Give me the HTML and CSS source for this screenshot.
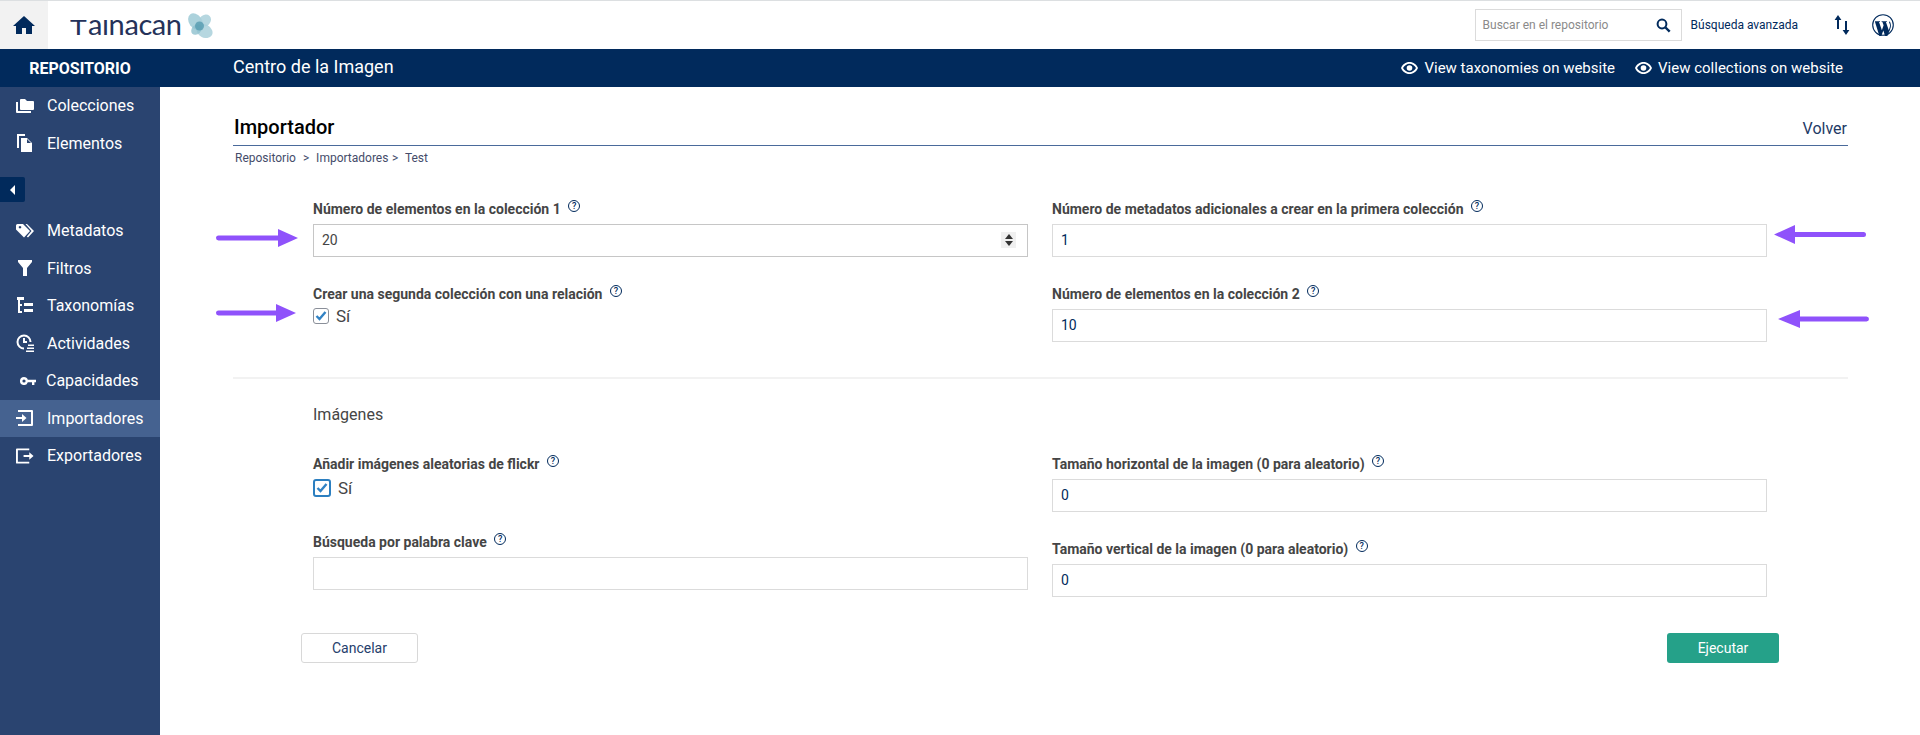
FILE: index.html
```html
<!DOCTYPE html>
<html lang="es">

<head>
    <meta charset="UTF-8">
    <title>Importador</title>
    <link rel="stylesheet" href="styles.css">
</head>

<body>

    <header class="topbar">
        <a class="home-btn">
            <svg width="22" height="20" viewBox="0 0 22 20"><path fill="#012a5c" d="M11 1 0 11h3v8h6v-6h4v6h6v-8h3z"/></svg>
        </a>
        <div class="logo">
            <span class="logo-text"><span class="logo-t">T</span>aınacan</span>
            <svg width="26" height="25" viewBox="0 0 26 25">
                <ellipse cx="8.500" cy="8.500" rx="9" ry="6.500" transform="rotate(55 8.500 8.500)" fill="#9ecad6" opacity=".85"/>
                <ellipse cx="18" cy="7.500" rx="6.500" ry="5.500" transform="rotate(-45 18 7.500)" fill="#a9d0db" opacity=".85"/>
                <ellipse cx="17.500" cy="18" rx="8.500" ry="6.500" transform="rotate(30 17.500 18)" fill="#a9d0db" opacity=".85"/>
                <ellipse cx="9.500" cy="16.500" rx="6" ry="4.500" transform="rotate(-45 9.500 16.500)" fill="#8fc0ce" opacity=".8"/>
                <circle cx="12.500" cy="13" r="4.500" fill="#5a9fb3" opacity=".85"/>
            </svg>
        </div>
        <div class="top-tools">
            <div class="search-box">
                <span>Buscar en el repositorio</span>
                <svg width="15" height="15" viewBox="0 0 15 15"><circle cx="6" cy="6" r="4.400" fill="none" stroke="#012a5c" stroke-width="2"/><path d="m9.500 9.500 4.200 4.200" stroke="#012a5c" stroke-width="2.400"/></svg>
            </div>
            <a class="adv-search">Búsqueda avanzada</a>
            <svg class="sort-icon" width="16" height="22" viewBox="0 0 16 22"><path fill="#012a5c" d="M4 1 .6 6h2.400v9h2V6h2.400zM11 7v9H8.600l3.400 5 3.400-5H13V7z"/></svg>
            <svg class="wp-icon" width="22" height="22" viewBox="0 0 22 22">
                <circle cx="11" cy="11" r="10.300" fill="none" stroke="#012a5c" stroke-width="1.100"/>
                <path fill="#012a5c" d="M2.800 7.200h5.200v.7l-1 .1 2.900 8.200 1.700-4.900-1.200-3.300-.8-.1v-.7h5.300v.7l-1 .1 2.900 8.200 1-3.200c.5-1.600.2-2.800-.4-3.700-.4-.7-.5-1.300-.2-1.900l.8.300c1.300 3 1.200 5-.2 8.500l-3.100 7.200-1 .1-2.400-7-2.500 7-1-.1z"/>
            </svg>
        </div>
    </header>

    <div class="layout">
        <aside class="sidebar">
            <div class="side-title">REPOSITORIO</div>
            <nav class="side-nav">
                <a class="side-item">
                    <svg width="18" height="16" viewBox="0 0 18 16"><path fill="#fff" d="M0 4h2v9h13v2H1a1 1 0 0 1-1-1zM4 2a1 1 0 0 1 1-1h4l2 2h6a1 1 0 0 1 1 1v7a1 1 0 0 1-1 1H5a1 1 0 0 1-1-1z"/></svg>
                    Colecciones
                </a>
                <a class="side-item">
                    <svg width="18" height="18" viewBox="0 0 18 18"><path fill="#fff" d="M1 0h8v2H3v12H1zM5 4h6l5 5v9H5zm6 1v4h4z"/></svg>
                    Elementos
                </a>
                <div class="side-toggle">
                    <span class="toggle-btn"><svg width="6" height="10" viewBox="0 0 6 10"><path fill="#fff" d="M5 0v10L0 5z"/></svg></span>
                </div>
                <a class="side-item">
                    <svg width="18" height="14" viewBox="0 0 18 14"><path fill="#fff" d="M0 1.500A1.500 1.500 0 0 1 1.500 0H7l7 7-6 6.500-8-8zM4 4.500a1.300 1.300 0 1 0-.01 0zM9.500 0h1.500l7 7-6 6.500-1.200-1L15.500 7z"/></svg>
                    Metadatos
                </a>
                <a class="side-item">
                    <svg width="18" height="16" viewBox="0 0 18 16"><path fill="#fff" d="M2 0h14v2l-5 6v8H7V8L2 2z"/></svg>
                    Filtros
                </a>
                <a class="side-item">
                    <svg width="18" height="18" viewBox="0 0 18 18"><path fill="#fff" d="M1 0h7v3H4v4h2v2H4v5h2v2H2V3H1zM8 6h9v3H8zM8 12h9v3H8z"/></svg>
                    Taxonomías
                </a>
                <a class="side-item">
                    <svg width="18" height="18" viewBox="0 0 18 18"><path fill="none" stroke="#fff" stroke-width="2" d="M14.500 8A6.500 6.500 0 1 0 8 14.500M8 4v4h3"/><path fill="#fff" d="M12 10.500h6V12h-6zM11 13.500h7V15h-7zM10 16.500h8V18h-8z"/></svg>
                    Actividades
                </a>
                <a class="side-item side-item-key">
                    <svg width="16" height="8" viewBox="0 0 16 8"><path fill="#fff" d="M4 0a4 4 0 0 1 3.800 2.800H16v2.400h-1.600V8h-2.400V5.200H7.800A4 4 0 1 1 4 0zm0 2.400a1.600 1.600 0 1 0 0 3.200 1.600 1.600 0 0 0 0-3.200z"/></svg>
                    Capacidades
                </a>
                <a class="side-item active">
                    <svg width="18" height="16" viewBox="0 0 18 16"><path fill="#fff" d="M2 0h14a1 1 0 0 1 1 1v14a1 1 0 0 1-1 1H2v-2h13V2H2zM0 7h6V4l4.500 4L6 12V9H0z"/></svg>
                    Importadores
                </a>
                <a class="side-item">
                    <svg width="19" height="16" viewBox="0 0 19 16"><path fill="#fff" d="M1 0h13v2H2v12h12v2H1a1 1 0 0 1-1-1V1a1 1 0 0 1 1-1zM8 7h6V4l4.500 4L14 12V9H8z"/></svg>
                    Exportadores
                </a>
            </nav>
        </aside>

        <main class="main">
            <div class="subheader">
                <span class="repo-name">Centro de la Imagen</span>
                <div class="view-links">
                    <a class="view-link">
                        <svg width="17" height="12" viewBox="0 0 17 12"><path fill="#fff" d="M8.500 0C4.500 0 1.500 2.500 0 6c1.500 3.500 4.500 6 8.500 6s7-2.500 8.500-6c-1.500-3.500-4.500-6-8.500-6zm0 10.200C6 10.200 3.500 8.500 2 6c1.500-2.500 4-4.200 6.500-4.200S13.500 3.500 15 6c-1.500 2.500-4 4.200-6.500 4.200z"/><circle cx="8.500" cy="6" r="2.800" fill="#fff"/></svg>
                        View taxonomies on website
                    </a>
                    <a class="view-link">
                        <svg width="17" height="12" viewBox="0 0 17 12"><path fill="#fff" d="M8.500 0C4.500 0 1.500 2.500 0 6c1.500 3.500 4.500 6 8.500 6s7-2.500 8.500-6c-1.500-3.500-4.500-6-8.500-6zm0 10.200C6 10.200 3.500 8.500 2 6c1.500-2.500 4-4.200 6.500-4.200S13.500 3.500 15 6c-1.500 2.500-4 4.200-6.500 4.200z"/><circle cx="8.500" cy="6" r="2.800" fill="#fff"/></svg>
                        View collections on website
                    </a>
                </div>
            </div>

            <div class="content">
                <div class="page-title">
                    <h1>Importador</h1>
                    <a class="back-link">Volver</a>
                </div>
                <div class="breadcrumb">Repositorio &nbsp;&gt;&nbsp;&nbsp;Importadores &gt;&nbsp; Test</div>

                <div class="form-grid form-top">
                    <div class="field">
                        <label>Número de elementos en la colección 1 <span class="help">?</span></label>
                        <div class="input input-number">
                            <span>20</span>
                            <span class="spinner"><i class="up"></i><i class="down"></i></span>
                        </div>
                    </div>
                    <div class="field">
                        <label>Número de metadatos adicionales a crear en la primera colección <span class="help">?</span></label>
                        <div class="input">1</div>
                    </div>
                    <div class="field">
                        <label>Crear una segunda colección con una relación <span class="help">?</span></label>
                        <div class="check">
                            <span class="checkbox"><svg width="12" height="10" viewBox="0 0 12 10"><path fill="none" stroke="#3182c4" stroke-width="2.400" d="m1.500 5 3 3 6-7"/></svg></span>
                            Sí
                        </div>
                    </div>
                    <div class="field">
                        <label>Número de elementos en la colección 2 <span class="help">?</span></label>
                        <div class="input">10</div>
                    </div>
                </div>

                <hr class="divider">

                <h2 class="section-title">Imágenes</h2>

                <div class="form-bottom">
                    <div class="form-col">
                        <div class="field">
                            <label>Añadir imágenes aleatorias de flickr <span class="help">?</span></label>
                            <div class="check check-focused">
                                <span class="checkbox focused"><svg width="12" height="10" viewBox="0 0 12 10"><path fill="none" stroke="#3182c4" stroke-width="2.400" d="m1.500 5 3 3 6-7"/></svg></span>
                                Sí
                            </div>
                        </div>
                        <div class="field field-keyword">
                            <label>Búsqueda por palabra clave <span class="help">?</span></label>
                            <div class="input"></div>
                        </div>
                    </div>
                    <div class="form-col">
                        <div class="field">
                            <label>Tamaño horizontal de la imagen (0 para aleatorio) <span class="help">?</span></label>
                            <div class="input">0</div>
                        </div>
                        <div class="field field-size">
                            <label>Tamaño vertical de la imagen (0 para aleatorio) <span class="help">?</span></label>
                            <div class="input">0</div>
                        </div>
                    </div>
                </div>

                <div class="actions">
                    <button class="btn btn-cancel">Cancelar</button>
                    <button class="btn btn-run">Ejecutar</button>
                </div>
            </div>
        </main>
    </div>

    <!-- flechas de anotacion encima de la captura -->
    <svg class="arrow arrow-l1" width="82" height="18" viewBox="0 0 82 18"><path fill="#8f52fb" d="M2.500 6.500H62V0l20 9-20 9v-6.500H2.500a2.500 2.500 0 0 1 0-5z"/></svg>
    <svg class="arrow arrow-l2" width="80" height="18" viewBox="0 0 80 18"><path fill="#8f52fb" d="M2.500 6.500H60V0l20 9-20 9v-6.500H2.500a2.500 2.500 0 0 1 0-5z"/></svg>
    <svg class="arrow arrow-r1" width="92" height="19" viewBox="0 0 92 19"><path fill="#8f52fb" d="M89.500 7H21V0L0 9.500 21 19v-7h68.500a2.500 2.500 0 0 0 0-5z"/></svg>
    <svg class="arrow arrow-r2" width="91" height="18" viewBox="0 0 91 18"><path fill="#8f52fb" d="M88.500 6.500H22V0L0 9l22 9v-6.500h66.500a2.500 2.500 0 0 0 0-5z"/></svg>

</body>

</html>
```

FILE: styles.css
```css
* {
    box-sizing: border-box;
}

body {
    margin: 0;
    height: 735px;
    overflow: hidden;
    position: relative;
    display: flex;
    flex-direction: column;
    font-family: Roboto, sans-serif;
    color: #454545;
    background-color: #fff;
}

/* barra superior */
.topbar {
    height: 49px;
    flex: none;
    display: flex;
    align-items: center;
    border-top: 1px solid #dcdfe1;
}

.home-btn {
    width: 48px;
    height: 48px;
    background-color: #f2f2f2;
    display: flex;
    align-items: center;
    justify-content: center;
}

.logo {
    margin-left: 22px;
    display: flex;
    align-items: center;
    gap: 5px;
}

.logo-text {
    font-family: Lato, sans-serif;
    font-size: 29px;
    line-height: 32px;
    letter-spacing: -0.4px;
    color: #25325a;
}

.logo-t {
    display: inline-block;
    font-size: 21px;
    transform: scaleX(1.35);
    transform-origin: left;
    margin-right: 6px;
}

.top-tools {
    margin-left: auto;
    display: flex;
    align-items: center;
    padding-right: 26px;
}

.search-box {
    width: 207px;
    height: 32px;
    border: 1px solid #dbdbdb;
    padding: 0 10px 0 7px;
    display: flex;
    align-items: center;
    justify-content: space-between;
    font-size: 12px;
    color: #8a8a8a;
}

.adv-search {
    margin-left: 9px;
    font-size: 12px;
    color: #012a5c;
}

.sort-icon {
    margin-left: 36px;
}

.wp-icon {
    margin-left: 22px;
}

/* layout */
.layout {
    flex: 1;
    display: flex;
}

.sidebar {
    width: 160px;
    flex: none;
    background-color: #2a4470;
}

.side-title {
    height: 38px;
    background-color: #012a5c;
    color: #fff;
    font-size: 16px;
    font-weight: 700;
    display: flex;
    align-items: center;
    justify-content: center;
}

.side-item {
    height: 37.5px;
    display: flex;
    align-items: center;
    gap: 13px;
    padding-left: 16px;
    color: #fff;
    font-size: 16px;
}

.side-item svg {
    flex: none;
    width: 18px;
}

.side-item.active {
    background-color: #456290;
}

.side-item-key {
    padding-left: 19px;
    gap: 9px;
}

.side-toggle {
    height: 50px;
    padding-top: 15px;
}

.toggle-btn {
    width: 25px;
    height: 25px;
    background-color: #012a5c;
    border-radius: 0 2px 2px 0;
    display: flex;
    align-items: center;
    justify-content: center;
}

.main {
    flex: 1;
    min-width: 0;
}

.subheader {
    height: 38px;
    background-color: #012a5c;
    color: #fff;
    display: flex;
    align-items: center;
    justify-content: space-between;
    padding: 0 77px 0 73px;
}

.repo-name {
    font-size: 18px;
    margin-bottom: 3px;
}

.view-links {
    display: flex;
    gap: 20px;
}

.view-link {
    display: flex;
    align-items: center;
    gap: 6px;
    font-size: 15px;
}

.content {
    padding: 0 72px 0 73px;
}

.page-title {
    height: 59px;
    padding-top: 22px;
    display: flex;
    align-items: center;
    justify-content: space-between;
    border-bottom: 1px solid #4a6a9b;
}

.page-title h1 {
    margin: 0 0 0 1px;
    font-size: 20px;
    font-weight: 500;
    color: #000;
}

.back-link {
    font-size: 16px;
    color: #1e3a66;
    margin-right: 1px;
    margin-top: 3px;
}

.breadcrumb {
    margin-top: 5px;
    padding-left: 2px;
    font-size: 12px;
    line-height: 14px;
    word-spacing: 0.5px;
    color: #454c6a;
}

/* formulario */
.form-grid,
.form-bottom {
    margin: 0 80px;
    display: grid;
    grid-template-columns: 715px 715px;
    column-gap: 24px;
}

.form-top {
    margin-top: 35px;
    row-gap: 28px;
}

.field label {
    display: block;
    font-size: 14px;
    font-weight: 700;
    line-height: 17px;
    height: 24px;
    color: #454545;
}

.help {
    display: inline-block;
    width: 12px;
    height: 12px;
    margin-left: 4px;
    border: 1px solid #012a5c;
    border-radius: 50%;
    color: #012a5c;
    font-size: 9px;
    line-height: 10px;
    text-align: center;
    vertical-align: 5px;
    font-weight: 500;
}

.input {
    height: 33px;
    border: 1px solid #dbdbdb;
    padding: 0 8px 1px;
    display: flex;
    align-items: center;
    justify-content: space-between;
    font-size: 14px;
    color: #012a5c;
}

.input-number {
    border-color: #c6c6c6;
    color: #454545;
}

.spinner {
    width: 15px;
    height: 16px;
    margin-right: 3px;
    background-color: #f0f0f0;
    display: flex;
    flex-direction: column;
    align-items: center;
    justify-content: center;
    gap: 2px;
}

.spinner i {
    width: 0;
    height: 0;
    border-left: 4px solid transparent;
    border-right: 4px solid transparent;
}

.spinner .up {
    border-bottom: 5px solid #333;
}

.spinner .down {
    border-top: 5px solid #333;
}

.check {
    display: flex;
    align-items: center;
    gap: 7px;
    font-size: 17px;
    height: 20px;
    margin-top: -3px;
    color: #454545;
}

.check-focused {
    margin-top: -1px;
}

.checkbox {
    width: 16px;
    height: 16px;
    border: 1px solid #8a8f99;
    border-radius: 3px;
    display: flex;
    align-items: center;
    justify-content: center;
}

.checkbox.focused {
    width: 18px;
    height: 18px;
    border: 2px solid #2c7fc0;
}

.divider {
    margin: 35px 0 0;
    border: 0;
    border-top: 2px solid #f2f2f2;
}

.section-title {
    margin: 26px 80px 0;
    font-size: 16px;
    font-weight: 400;
    line-height: 20px;
    color: #454545;
}

.form-bottom {
    margin-top: 30px;
}

.field-keyword {
    margin-top: 35px;
}

.field-size {
    margin-top: 28px;
}

.actions {
    margin: 36px 69px 0 68px;
    display: flex;
    justify-content: space-between;
}

.btn {
    height: 30px;
    border-radius: 3px;
    font-family: Roboto, sans-serif;
    font-size: 14px;
}

.btn-cancel {
    width: 117px;
    background-color: #fff;
    border: 1px solid #d8d8d8;
    color: #25406c;
}

.btn-run {
    width: 112px;
    background-color: #25a189;
    border: 0;
    color: #fff;
}

/* flechas */
.arrow {
    position: absolute;
}

.arrow-l1 {
    left: 216px;
    top: 229px;
}

.arrow-l2 {
    left: 216px;
    top: 304px;
}

.arrow-r1 {
    left: 1774px;
    top: 225px;
}

.arrow-r2 {
    left: 1778px;
    top: 310px;
}
```
